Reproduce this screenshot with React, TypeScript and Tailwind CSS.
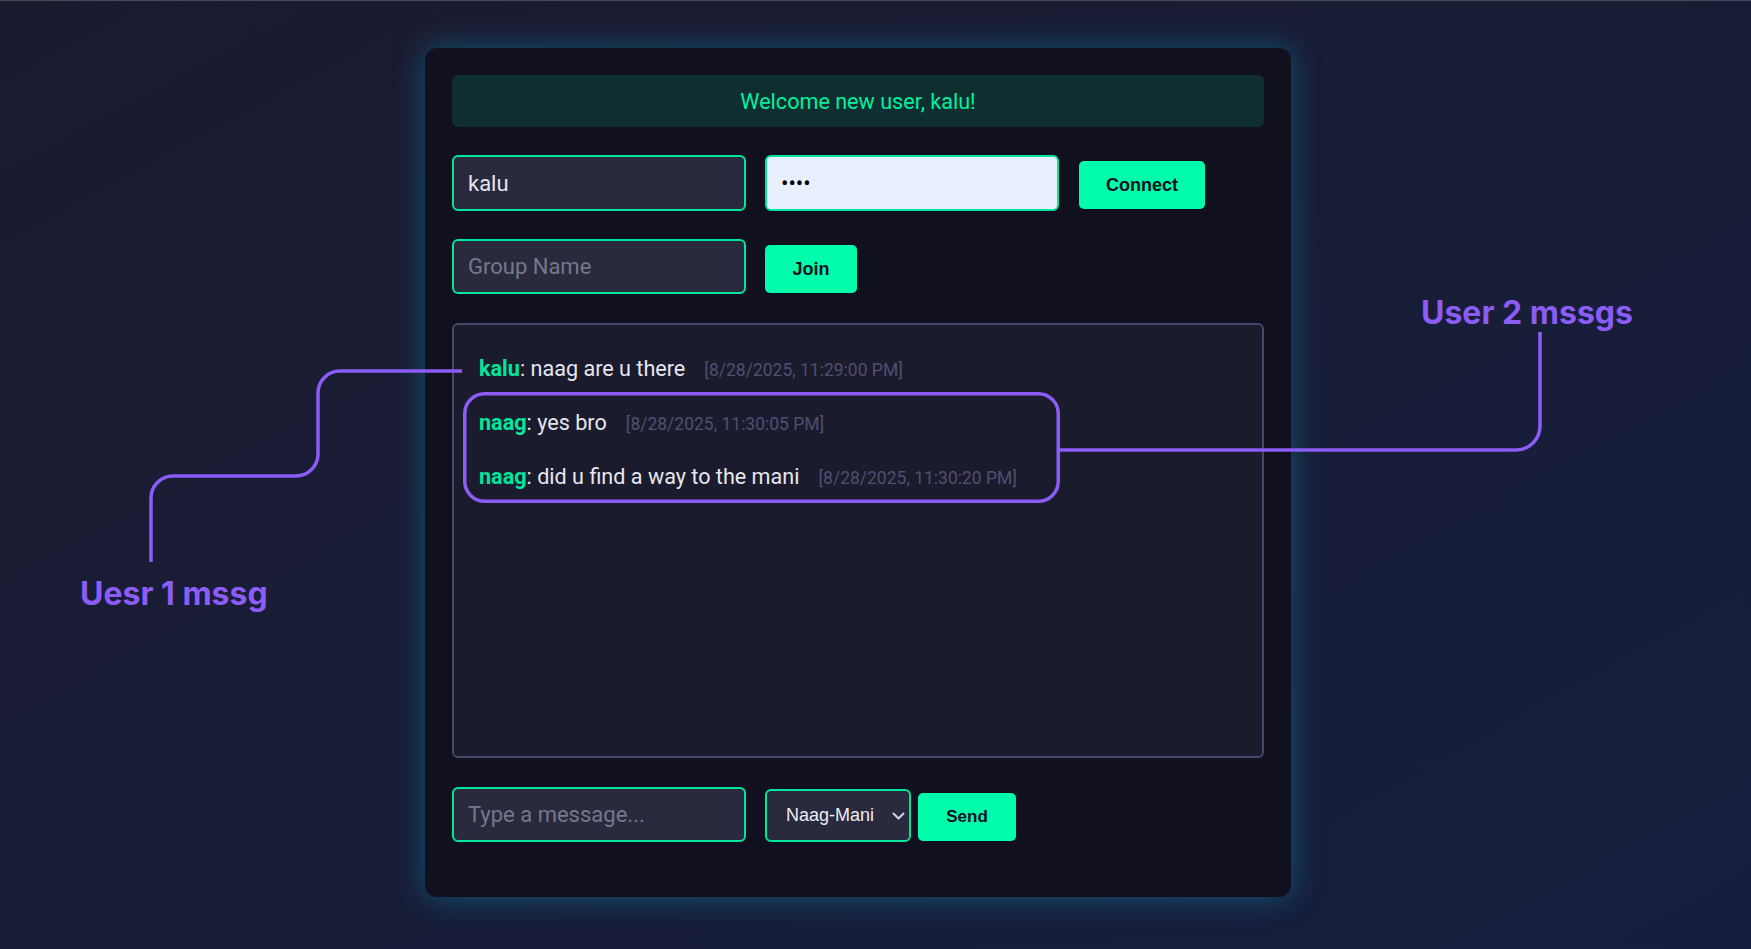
import React from "react";

const msgs = [
  { name: "kalu", text: "naag are u there", ts: "[8/28/2025, 11:29:00 PM]" },
  { name: "naag", text: "yes bro", ts: "[8/28/2025, 11:30:05 PM]" },
  { name: "naag", text: "did u find a way to the mani", ts: "[8/28/2025, 11:30:20 PM]" },
];

export default function App() {
  const roboto = { fontFamily: "Roboto, 'Liberation Sans', sans-serif" };
  return (
    <div className="relative h-[949px] w-[1751px] overflow-hidden bg-gradient-to-br from-[#1b1b30] to-[#151f3d]">
      <div className="h-px w-full bg-[#474759]" />
      <div className="pl-[425px] pt-[47px]">
        <div
          className="flex h-[849px] w-[866px] flex-col rounded-[12px] bg-[#10101f] p-[27px] shadow-[0_0_30px_rgba(0,190,230,0.35)]"
          style={roboto}
        >
          <div className="flex h-[52px] items-center justify-center rounded-[6px] bg-[#0f2e30] pt-[3px] text-[21.6px] text-[#00f0a0]">
            Welcome new user, kalu!
          </div>

          <div className="mt-[28px] flex h-[56px] items-center">
            <input
              readOnly
              defaultValue="kalu"
              className="h-[56px] w-[294px] rounded-[6px] border-2 border-[#00e69c] bg-[#2a2a3f] px-[14px] text-[22px] text-[#e4e4ec] outline-none"
            />
            <input
              readOnly
              type="password"
              defaultValue="abcd"
              className="ml-[19px] h-[56px] w-[294px] rounded-[6px] border-2 border-[#00e69c] bg-[#e8f0fe] px-[14px] text-[22px] text-black outline-none"
            />
            <button
              className="ml-[20px] mt-[4px] h-[48px] w-[126px] rounded-[5px] bg-[#00fdab] text-[18px] font-bold text-[#10101f]"
              style={{ fontFamily: "'Liberation Sans', Arial, sans-serif" }}
            >
              Connect
            </button>
          </div>

          <div className="mt-[28px] flex h-[55px] items-center">
            <input
              readOnly
              placeholder="Group Name"
              className="h-[55px] w-[294px] rounded-[6px] border-2 border-[#00e69c] bg-[#2a2a3f] px-[14px] text-[22px] text-[#e4e4ec] outline-none placeholder:text-[#77778a]"
            />
            <button
              className="ml-[19px] mt-[5px] h-[48px] w-[92px] rounded-[5px] bg-[#00fdab] text-[18px] font-bold text-[#10101f]"
              style={{ fontFamily: "'Liberation Sans', Arial, sans-serif" }}
            >
              Join
            </button>
          </div>

          <div className="mt-[29px] flex h-[435px] flex-col rounded-[6px] border-2 border-[#48476a] bg-[#1b1b2e] pl-[25px] pt-[17px]">
            {msgs.map((m, i) => (
              <div key={i} className="flex h-[54px] items-center">
                <div className="flex items-baseline">
                  <span className="text-[21.6px] text-[#e6e6ee]">
                    <span className="font-bold text-[#00e69c]">{m.name}</span>: {m.text}
                  </span>
                  <span className="ml-[19px] text-[17.5px] text-[#4f4f6e]">{m.ts}</span>
                </div>
              </div>
            ))}
          </div>

          <div className="mt-[29px] flex h-[55px] items-center">
            <input
              readOnly
              placeholder="Type a message..."
              className="h-[55px] w-[294px] rounded-[6px] border-2 border-[#00e69c] bg-[#2a2a3f] px-[14px] text-[22px] text-[#e4e4ec] outline-none placeholder:text-[#77778a]"
            />
            <div
              className="ml-[19px] mt-[2px] flex h-[53px] w-[146px] items-center rounded-[6px] border-2 border-[#00e69c] bg-[#2a2a3f] pl-[19px] pr-[4px] text-[18px] text-[#ececf2]"
              style={{ fontFamily: "'Liberation Sans', Arial, sans-serif" }}
            >
              <span className="flex-1">Naag-Mani</span>
              <svg width="13" height="8" viewBox="0 0 13 8" fill="none">
                <path d="M1.5 1.5 L6.5 6.5 L11.5 1.5" stroke="#d6d6de" strokeWidth="2" strokeLinecap="round" strokeLinejoin="round" />
              </svg>
            </div>
            <button
              className="ml-[7px] mt-[4px] h-[48px] w-[98px] rounded-[5px] bg-[#00fdab] text-[17px] font-bold text-[#10101f]"
              style={{ fontFamily: "'Liberation Sans', Arial, sans-serif" }}
            >
              Send
            </button>
          </div>
        </div>
      </div>

      <svg className="pointer-events-none absolute left-0 top-0" width="1751" height="949" viewBox="0 0 1751 949" fill="none">
        <rect x="464.75" y="393.75" width="593.5" height="107.5" rx="20" stroke="#8b5cf6" strokeWidth="3.5" />
        <path
          d="M462 371 H340 A22 22 0 0 0 318 393 V454 A22 22 0 0 1 296 476 H173 A22 22 0 0 0 151 498 V562"
          stroke="#8b5cf6"
          strokeWidth="3.5"
        />
        <path d="M1060 450 H1516 A24 24 0 0 0 1540 426 V332" stroke="#8b5cf6" strokeWidth="3.5" />
      </svg>

      <div
        className="absolute left-[80px] top-[578px] whitespace-nowrap text-[32px] font-bold leading-none text-[#8b5cf6]"
        style={{ fontFamily: "Inter, sans-serif" }}
      >
        Uesr 1 mssg
      </div>
      <div
        className="absolute left-[1421px] top-[297px] whitespace-nowrap text-[32px] font-bold leading-none text-[#8b5cf6]"
        style={{ fontFamily: "Inter, sans-serif" }}
      >
        User 2 mssgs
      </div>
    </div>
  );
}
